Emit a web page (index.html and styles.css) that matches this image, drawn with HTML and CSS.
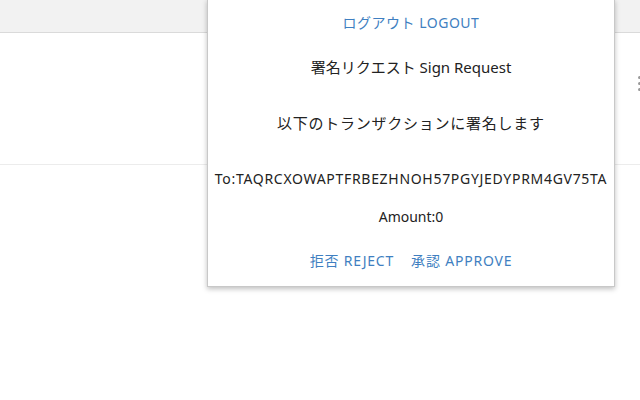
FILE: index.html
```html
<!DOCTYPE html>
<html>
<head>
  <link rel="stylesheet" href="styles.css">
</head>
<body>

<div class="topbar"></div>
<div class="row">
  <span class="kebab"><i></i><i></i><i></i></span>
</div>

<div class="popup">
  <a class="link logout">ログアウト LOGOUT</a>
  <div class="title">署名リクエスト Sign Request</div>
  <div class="message">以下のトランザクションに署名します</div>
  <div class="detail to">To:TAQRCXOWAPTFRBEZHNOH57PGYJEDYPRM4GV75TA</div>
  <div class="detail amount">Amount:0</div>
  <div class="actions">
    <a class="link btn">拒否 REJECT</a>
    <a class="link btn">承認 APPROVE</a>
  </div>
</div>

</body>
</html>
```

FILE: styles.css
```css
body {
  margin: 0;
  font-family: "Noto Sans", "Noto Sans CJK JP", sans-serif;
  background: #fff;
  color: #222;
}
.topbar {
  height: 32px;
  background-color: #f2f2f2;
  border-bottom: 1px solid #dadada;
}
.row {
  height: 131px;
  border-bottom: 1px solid #ececec;
  display: flex;
  justify-content: flex-end;
  align-items: center;
}
.kebab {
  display: flex;
  flex-direction: column;
  gap: 3px;
  margin-right: -1px;
  margin-top: -30px;
}
.kebab i {
  width: 3px;
  height: 3px;
  background: #999;
  border-radius: 50%;
}
.popup {
  position: absolute;
  left: 207px;
  top: -1px;
  width: 408px;
  height: 288px;
  background: #fff;
  border: 1px solid #c8c8c8;
  box-shadow: 0 2px 5px rgba(0, 0, 0, 0.25);
  display: flex;
  flex-direction: column;
  align-items: center;
  box-sizing: border-box;
}
.link {
  color: #3f7fc1;
  font-size: 14px;
  cursor: pointer;
}
.logout {
  margin-top: 13px;
  line-height: 20px;
  letter-spacing: 0.5px;
}
.title {
  margin-top: 23px;
  font-size: 15px;
  line-height: 22px;
}
.message {
  margin-top: 34px;
  font-size: 15px;
  line-height: 22px;
  letter-spacing: 0.75px;
}
.detail {
  font-size: 14px;
  line-height: 20px;
}
.to {
  margin-top: 35px;
  letter-spacing: 0.7px;
}
.amount {
  margin-top: 18px;
}
.actions {
  margin-top: 24px;
  display: flex;
  gap: 17px;
}
.btn {
  letter-spacing: 0.8px;
  line-height: 20px;
}
```
